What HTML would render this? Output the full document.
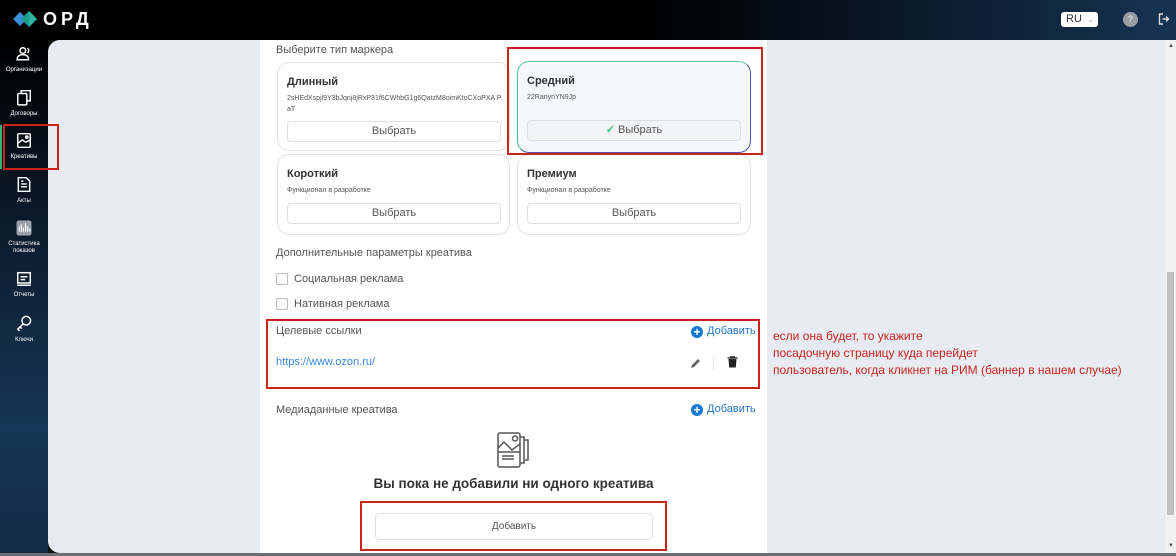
<!DOCTYPE html>
<html><head><meta charset="utf-8">
<style>
*{box-sizing:border-box;margin:0;padding:0}
body{width:1176px;height:556px;overflow:hidden;font-family:"Liberation Sans",sans-serif;background:#111;position:relative}
.top{position:absolute;left:0;top:0;width:1176px;height:40px;background:linear-gradient(90deg,#000 0%,#000 55%,#0a1a2c 78%,#163452 100%)}
.side{position:absolute;left:0;top:40px;width:48px;height:516px;background:linear-gradient(180deg,#000 0%,#0b1a2b 35%,#153656 75%,#112b45 100%)}
.main{position:absolute;left:48px;top:40px;width:1117px;height:513px;background:#e8ebf2;border-radius:12px 0 0 12px}
.sb{position:absolute;left:1165px;top:40px;width:11px;height:513px;background:#f1f1f1}
.sb .th{position:absolute;left:2px;top:232px;width:7px;height:243px;background:#c1c1c1}
.bot{position:absolute;left:0;top:553px;width:1176px;height:3px;background:#6b6f74}
.panel{position:absolute;left:260px;top:40px;width:507px;height:513px;background:#fff}
.nav{position:absolute;left:0;width:48px;text-align:center;color:#fff;font-size:6px}
.nav svg{display:block;margin:0 auto 5px}
.t{position:absolute;color:#555;font-size:11px}
.card{position:absolute;border:1px solid #e0e2e6;border-radius:12px;background:#fff}
.card h4{position:absolute;left:9px;top:13px;font-size:11px;color:#333;font-weight:bold}
.card .s{position:absolute;left:9px;top:30px;font-size:7px;color:#555;line-height:11px;width:218px;word-break:break-all}
.btn{position:absolute;left:9px;width:214px;height:21px;border:1px solid #dcdfe3;border-radius:4px;font-size:11px;color:#555;text-align:center;line-height:19px;background:#fff}
.cb{position:absolute;left:276px;width:12px;height:12px;border:1px solid #bbb;border-radius:2px}
.red{position:absolute;border:2px solid #c8241c}
.add{position:absolute;left:692px;font-size:11px;color:#1e73c8}
.add i{display:inline-block;width:12px;height:12px;border-radius:50%;background:#1877d2;color:#fff;font-style:normal;font-weight:bold;text-align:center;line-height:12px;font-size:12px;vertical-align:-2px;margin-right:4px}
.note{position:absolute;left:773px;color:#c8241c;font-size:12px}
</style></head><body>
<div class="top">
 <svg style="position:absolute;left:13px;top:8px" width="26" height="22" viewBox="0 0 26 22"><polygon points="0,11 7,4 14,11 7,18" fill="#3a8fd8"/><polygon points="8,11 16,3 24,11 16,19" fill="#1f9a8c"/><polygon points="16,3 24,11 16,19" fill="#2fb5a0"/></svg>
 <div style="position:absolute;left:43px;top:9px;color:#fff;font-size:18px;letter-spacing:4px;font-weight:bold">ОРД</div>
 <div style="position:absolute;left:1061px;top:12px;width:37px;height:15px;background:#fff;border-radius:3px;font-size:11px;color:#333;padding-left:5px;line-height:15px">RU <span style="color:#aaa;font-size:8px;margin-left:2px">⌄</span></div>
 <div style="position:absolute;left:1123px;top:12px;width:15px;height:15px;border-radius:50%;background:#9a9da2;color:#ddd;font-size:9px;text-align:center;line-height:15px;font-weight:bold">?</div>
 <svg style="position:absolute;left:1158px;top:13px" width="12" height="12" viewBox="0 0 12 12" fill="none" stroke="#ddd" stroke-width="1.4"><path d="M5 1H1.5v10H5M4.5 6h6M8 3.5L10.5 6 8 8.5"/></svg>
</div>
<div class="side"></div>
<div class="main"></div>
<div class="panel"></div>
<div class="sb"><div class="th"></div><div style="position:absolute;left:3px;top:3px;color:#555;font-size:6px">▲</div><div style="position:absolute;left:3px;top:503px;color:#555;font-size:6px">▼</div></div>
<div class="bot"></div>

<div class="nav" style="top:46px"><svg width="16" height="16" viewBox="0 0 14 14" fill="none" stroke="#fff" stroke-width="1.3"><circle cx="6" cy="4" r="2.5"/><path d="M1 12c0-3 2-4.5 5-4.5s5 1.5 5 4.5zM10 2a2.3 2.3 0 0 1 0 4"/></svg>Организации</div>
<div class="nav" style="top:89px"><svg width="16" height="17" viewBox="0 0 14 15" fill="none" stroke="#fff" stroke-width="1.3"><rect x="1.5" y="4" width="8" height="10" rx="1"/><path d="M4.5 4V1.5h8v9H9.5"/></svg>Договоры</div>
<div class="nav" style="top:132px"><svg width="16" height="17" viewBox="0 0 14 15" fill="none" stroke="#fff" stroke-width="1.3"><rect x="1.5" y="1.5" width="11" height="12" rx="1"/><path d="M1.5 10l4-3 3 2 4-2"/><circle cx="9.5" cy="4.5" r="1"/></svg>Креативы</div>
<div style="position:absolute;left:0;top:125px;width:2px;height:44px;background:#2fb57a"></div>
<div class="nav" style="top:176px"><svg width="16" height="17" viewBox="0 0 14 15" fill="none" stroke="#fff" stroke-width="1.3"><path d="M2 1.5h7l3 3v9H2z"/><path d="M4.5 7h5M4.5 9.5h5M4.5 4.5h2"/></svg>Акты</div>
<div class="nav" style="top:220px;line-height:7px"><svg width="16" height="16" viewBox="0 0 15 15"><rect x="0.5" y="0.5" width="14" height="14" rx="2" fill="#9aa3ad"/><path d="M3 11V6M5 11V4M7 11V7M9 11V3M11 11V6M13 11V8" stroke="#fff" stroke-width="1"/></svg>Статистика<br>показов</div>
<div class="nav" style="top:271px"><svg width="16" height="16" viewBox="0 0 14 14" fill="none" stroke="#fff" stroke-width="1.3"><rect x="1.5" y="1.5" width="11" height="9"/><path d="M4 5h6M4 7.5h4M1 12.5h12"/></svg>Отчеты</div>
<div class="nav" style="top:315px"><svg width="16" height="17" viewBox="0 0 14 15" fill="none" stroke="#fff" stroke-width="1.3"><circle cx="9" cy="5" r="3.8"/><path d="M6.3 7.7L1.5 12.5l1.5 1.5M3.5 10.5l1.5 1.5"/></svg>Ключи</div>
<div class="red" style="left:3px;top:124px;width:56px;height:46px"></div>

<div class="t" style="left:276px;top:44px">Выберите тип маркера</div>
<div class="card" style="left:277px;top:62px;width:233px;height:89px"><h4>Длинный</h4><div class="s">2sHEdXspjl9Y3bJqnj8jRxP31f6CWhbG1g6QatzM8oimKtoCXoPXA PaT</div><div class="btn" style="top:58px">Выбрать</div></div>
<div class="card" style="left:517px;top:61px;width:234px;height:92px;border:1.5px solid #4a5aa8;border-left-color:#48c98a;border-top-color:#6dc4a0;background:#f4f7fc"><h4>Средний</h4><div class="s">22RanynYN9Jp</div><div class="btn" style="top:58px;background:#f3f4f6"><span style="color:#3cc47a;font-weight:bold">✓</span> Выбрать</div></div>
<div class="card" style="left:277px;top:154px;width:233px;height:81px"><h4>Короткий</h4><div class="s">Функционал в разработке</div><div class="btn" style="top:48px">Выбрать</div></div>
<div class="card" style="left:517px;top:154px;width:234px;height:81px"><h4>Премиум</h4><div class="s">Функционал в разработке</div><div class="btn" style="top:48px">Выбрать</div></div>
<div class="red" style="left:507px;top:47px;width:256px;height:108px"></div>

<div class="t" style="left:276px;top:247px">Дополнительные параметры креатива</div>
<div class="cb" style="top:273px"></div><div class="t" style="left:294px;top:273px">Социальная реклама</div>
<div class="cb" style="top:298px"></div><div class="t" style="left:294px;top:298px">Нативная реклама</div>

<div class="t" style="left:276px;top:325px">Целевые ссылки</div>
<div class="add" style="top:325px;left:691px"><i>+</i>Добавить</div>
<div class="t" style="left:276px;top:356px;color:#3a86e0">https://www.ozon.ru/</div>
<svg style="position:absolute;left:690px;top:357px" width="12" height="12" viewBox="0 0 12 12"><path d="M1 11l1-3 6-6 2 2-6 6z" fill="#666"/></svg>
<div style="position:absolute;left:713px;top:356px;width:1px;height:14px;background:#e5e5e5"></div>
<svg style="position:absolute;left:727px;top:356px" width="11" height="12" viewBox="0 0 11 12"><path d="M0.5 2h10M3.5 2V0.8h4V2" stroke="#222" stroke-width="1.2" fill="none"/><path d="M1.5 3h8l-0.7 8.5H2.2z" fill="#222"/></svg>
<div class="red" style="left:266px;top:319px;width:494px;height:70px"></div>

<div class="t" style="left:276px;top:404px">Медиаданные креатива</div>
<div class="add" style="top:403px;left:691px"><i>+</i>Добавить</div>
<svg style="position:absolute;left:496px;top:431px" width="36" height="38" viewBox="0 0 36 38" fill="none" stroke="#555" stroke-width="1.5"><rect x="2" y="2" width="22" height="34" rx="2"/><path d="M24 6h4v26h-4M28 9h4v20h-4"/><path d="M2 17l6-6 8 8 8-6M2 21h22M6 25h12M6 28h12"/><circle cx="19" cy="7.5" r="2.5"/></svg>
<div style="position:absolute;left:260px;top:476px;width:507px;text-align:center;font-size:13.5px;font-weight:bold;color:#333">Вы пока не добавили ни одного креатива</div>
<div class="btn" style="left:375px;top:513px;width:278px;height:27px;line-height:25px;font-size:10px;border-radius:5px">Добавить</div>
<div class="red" style="left:360px;top:501px;width:307px;height:50px"></div>

<div class="note" style="top:329px">если она будет, то укажите</div>
<div class="note" style="top:346px">посадочную страницу куда перейдет</div>
<div class="note" style="top:363px">пользователь, когда кликнет на РИМ (баннер в нашем случае)</div>
</body></html>
